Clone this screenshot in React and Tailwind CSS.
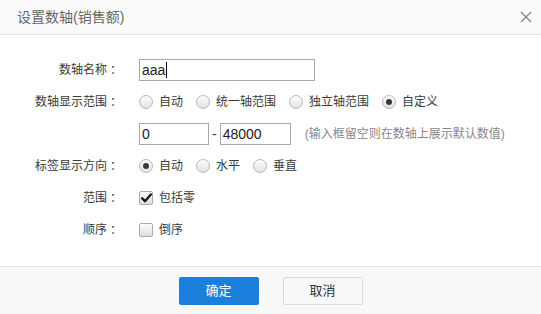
import React from "react";

const font = { fontFamily: '"Liberation Sans", "Noto Sans CJK SC", sans-serif' };
const tc = { fontFamily: '"Noto Sans CJK TC", sans-serif' };

function Radio({ checked }) {
  return (
    <span className="flex h-[14px] w-[14px] items-center justify-center rounded-full border border-[#b8b8b8] bg-gradient-to-b from-[#fdfdfd] to-[#e2e2e2]">
      {checked && <span className="h-[6px] w-[6px] rounded-full bg-[#3a3a3a]" />}
    </span>
  );
}

function RadioItem({ checked, label }) {
  return (
    <span className="mr-[13px] flex items-center">
      <Radio checked={checked} />
      <span className="ml-[6px]">{label}</span>
    </span>
  );
}

function Checkbox({ checked }) {
  return (
    <span className="flex h-[14px] w-[14px] items-center justify-center rounded-[2px] border border-[#aaaaaa] bg-gradient-to-b from-[#fbfbfb] to-[#dedede]">
      {checked && (
        <svg width="11" height="10" viewBox="0 0 11 10">
          <path d="M1.2 5.4 L4 8.2 L9.8 1.5" fill="none" stroke="#1a1a1a" strokeWidth="2.4" strokeLinecap="round" strokeLinejoin="round" />
        </svg>
      )}
    </span>
  );
}

function Row({ label, children }) {
  return (
    <div className="flex h-[32px] items-center">
      <div className="flex w-[119px] shrink-0 justify-end">
        {label && (
          <>
            <span>{label}</span>
            <span className="w-[12px] text-center" style={tc}>：</span>
          </>
        )}
      </div>
      <div className="ml-[20px] flex items-center">{children}</div>
    </div>
  );
}

export default function App() {
  return (
    <div className="flex h-[314px] w-[541px] flex-col bg-white text-[12px] text-[#3a3a3a]" style={font}>
      <div className="flex h-[35px] shrink-0 items-center justify-between border-b border-[#e6e6e6] bg-[#fafafa] pl-[17px] pr-[9px]">
        <span className="text-[14px] text-[#666]">设置数轴(销售额)</span>
        <svg width="12" height="12" viewBox="0 0 12 12">
          <path d="M1 1 L11 11 M11 1 L1 11" stroke="#888" strokeWidth="1.4" />
        </svg>
      </div>
      <div className="flex-1 pt-[19px]">
        <Row label="数轴名称">
          <div className="flex h-[22px] w-[176px] items-center border border-[#a8a8a8] px-[2px] text-[14px] text-[#222]">
            aaa<span className="ml-[1px] inline-block h-[16px] w-[1px] bg-black" />
          </div>
        </Row>
        <Row label="数轴显示范围">
          <RadioItem label="自动" />
          <RadioItem label="统一轴范围" />
          <RadioItem label="独立轴范围" />
          <RadioItem checked label="自定义" />
        </Row>
        <Row label="">
          <div className="flex h-[22px] w-[70px] items-center border border-[#a8a8a8] px-[2px] text-[14px] text-[#222]">0</div>
          <span className="mx-[3px] text-[14px]">-</span>
          <div className="flex h-[22px] w-[71px] items-center border border-[#a8a8a8] px-[2px] text-[14px] text-[#222]">48000</div>
          <span className="ml-[14px] text-[#888]">(输入框留空则在数轴上展示默认数值)</span>
        </Row>
        <Row label="标签显示方向">
          <RadioItem checked label="自动" />
          <RadioItem label="水平" />
          <RadioItem label="垂直" />
        </Row>
        <Row label="范围">
          <Checkbox checked />
          <span className="ml-[6px]">包括零</span>
        </Row>
        <Row label="顺序">
          <Checkbox />
          <span className="ml-[6px]">倒序</span>
        </Row>
      </div>
      <div className="flex h-[48px] shrink-0 items-center justify-center gap-[24px] border-t border-[#e6e6e6] bg-[#f8f8f8]">
        <button className="h-[28px] w-[80px] rounded-[2px] bg-[#1a80dc] text-[13px] text-white">确定</button>
        <button className="h-[28px] w-[80px] rounded-[2px] border border-[#dcdcdc] bg-[#f7f8fa] text-[13px] text-[#333]">取消</button>
      </div>
    </div>
  );
}
